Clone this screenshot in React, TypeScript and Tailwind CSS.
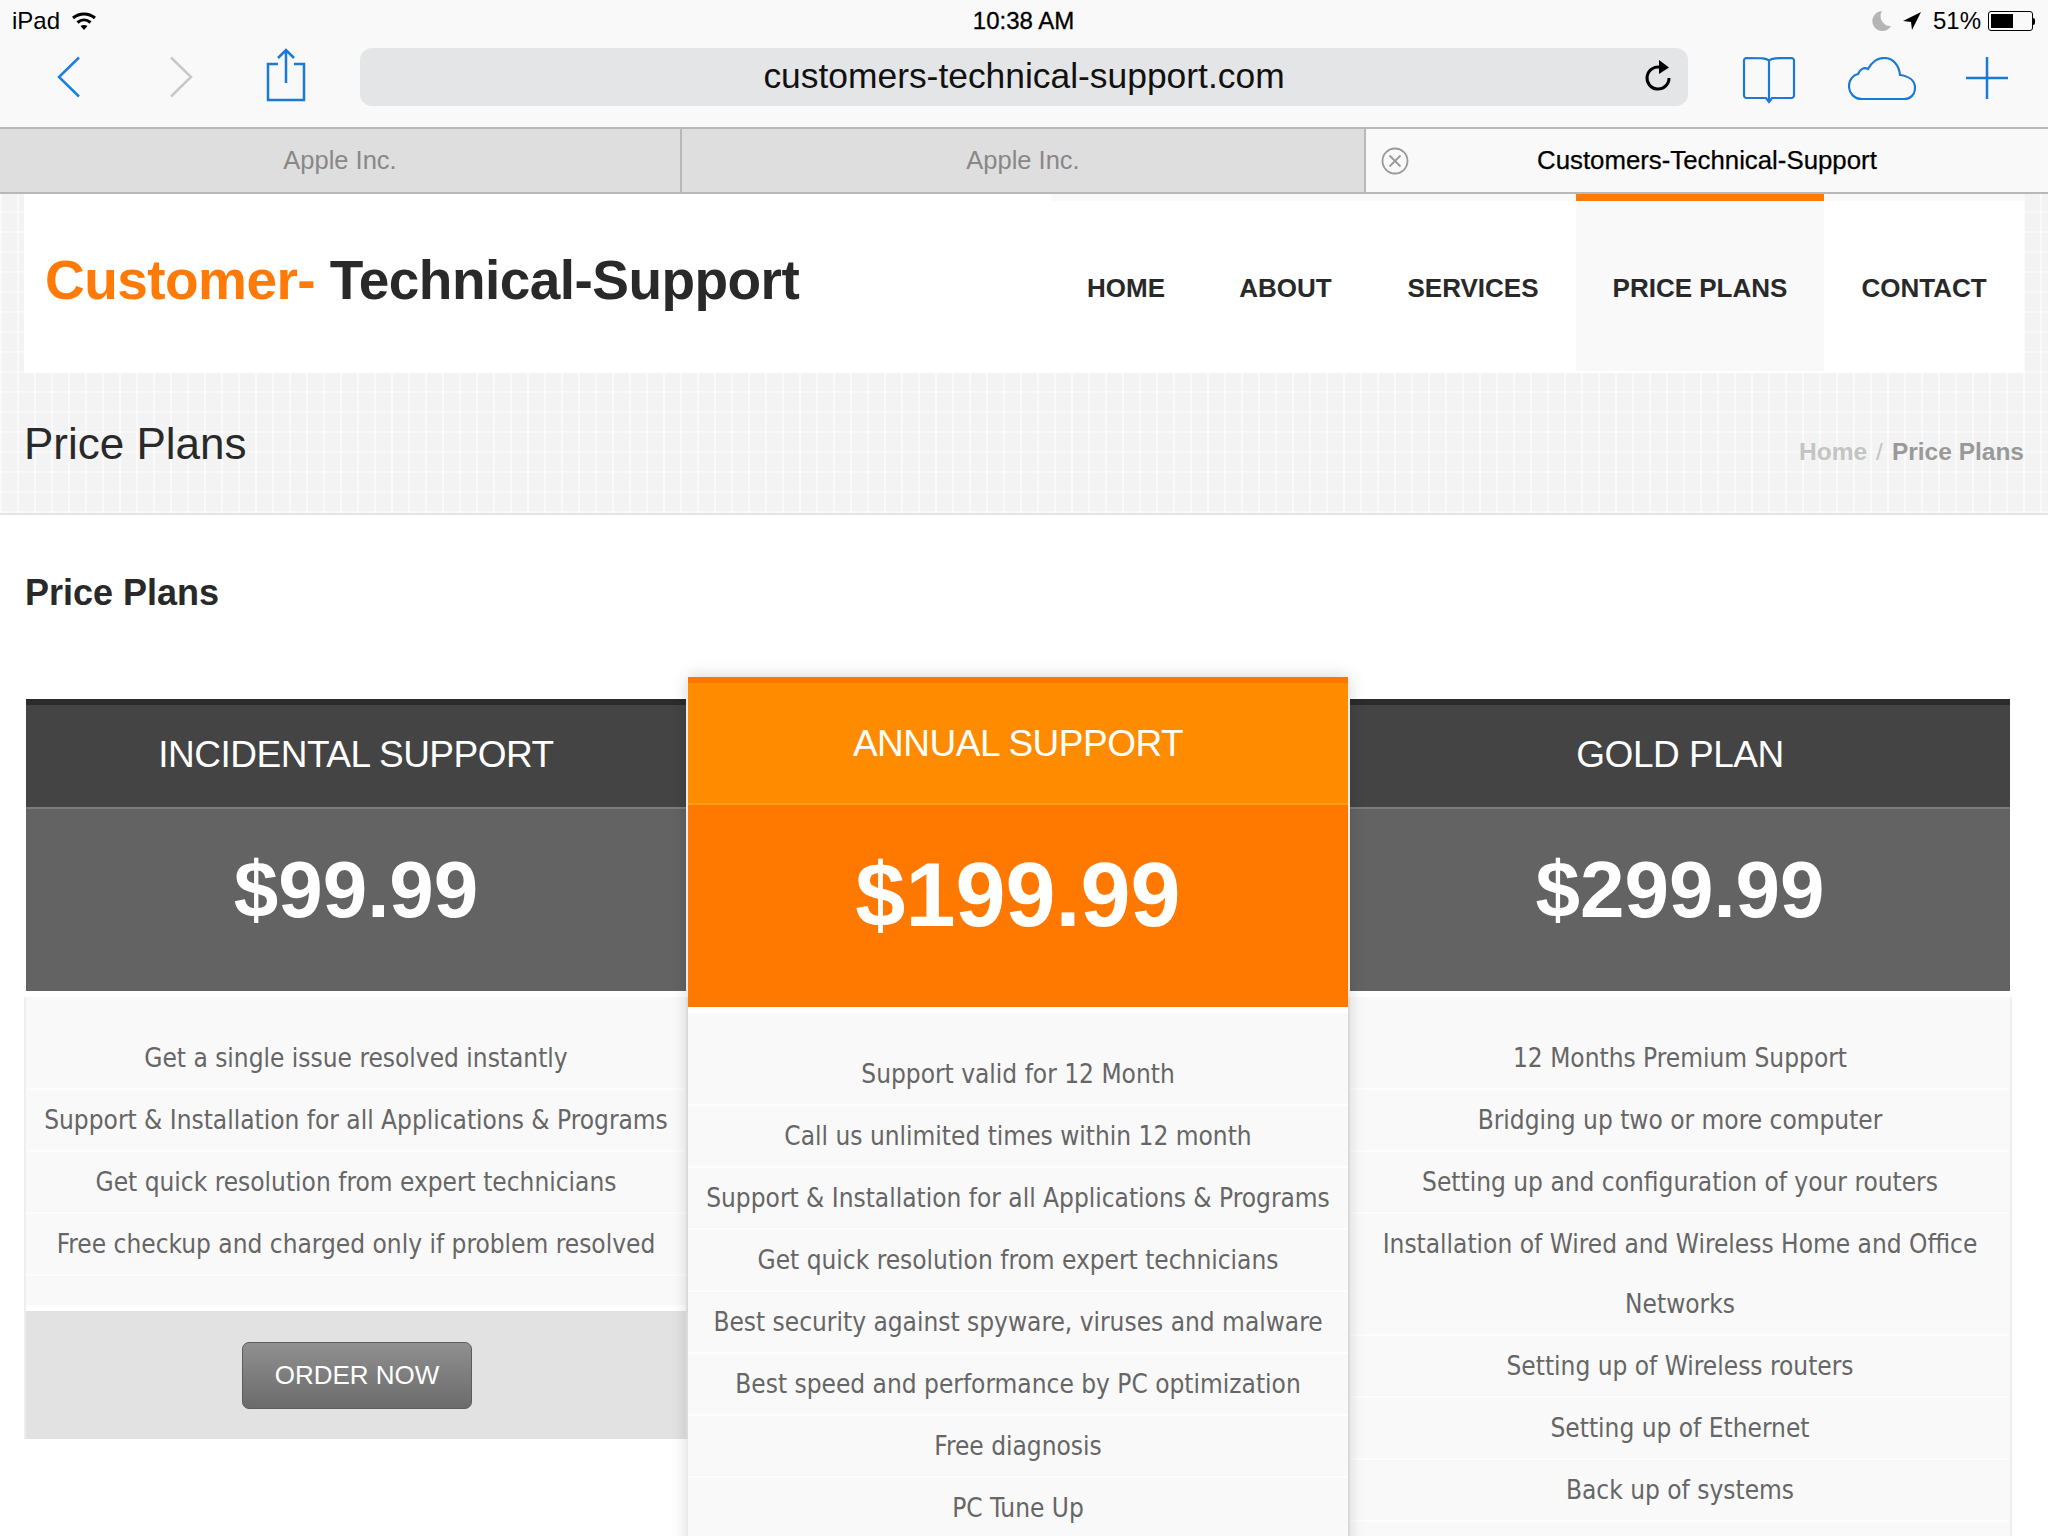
import clsx from 'clsx'

const texture =
  '[background-image:repeating-linear-gradient(0deg,rgba(255,255,255,0.4)_0,rgba(255,255,255,0.4)_2px,transparent_2px,transparent_20px),repeating-linear-gradient(90deg,rgba(255,255,255,0.55)_0,rgba(255,255,255,0.55)_2px,transparent_2px,transparent_17px)]'

const navItems = [
  { label: 'HOME', width: 'w-[150px]' },
  { label: 'ABOUT', width: 'w-[169px]' },
  { label: 'SERVICES', width: 'w-[206px]' },
  { label: 'PRICE PLANS', width: 'w-[248px]', active: true },
  { label: 'CONTACT', width: 'w-[200px]' },
]

const incidental = [
  'Get a single issue resolved instantly',
  'Support & Installation for all Applications & Programs',
  'Get quick resolution from expert technicians',
  'Free checkup and charged only if problem resolved',
]

const annual = [
  'Support valid for 12 Month',
  'Call us unlimited times within 12 month',
  'Support & Installation for all Applications & Programs',
  'Get quick resolution from expert technicians',
  'Best security against spyware, viruses and malware',
  'Best speed and performance by PC optimization',
  'Free diagnosis',
  'PC Tune Up',
]

const gold = [
  '12 Months Premium Support',
  'Bridging up two or more computer',
  'Setting up and configuration of your routers',
  'Installation of Wired and Wireless Home and Office Networks',
  'Setting up of Wireless routers',
  'Setting up of Ethernet',
  'Back up of systems',
]

function Features({ items }: { items: string[] }) {
  return (
    <ul className="font-['DejaVu_Sans_Condensed','DejaVu_Sans',sans-serif] text-[26px] leading-[60px] text-[#666]">
      {items.map((item) => (
        <li key={item} className="border-b-2 border-[#fdfdfd] px-2 text-center">
          {item}
        </li>
      ))}
    </ul>
  )
}

function StatusBar() {
  return (
    <div className="flex h-[40px] items-center justify-between pl-[12px] pr-[13px] pt-[2px] text-[24px] text-black">
      <div className="flex w-[300px] items-center gap-[11px]">
        <span>iPad</span>
        <svg width="26" height="20" viewBox="0 0 26 20" fill="none" stroke="black" strokeWidth="3">
          <path d="M2 7c6.500-5.500 15.500-5.500 22 0" />
          <path d="M6.500 11.500c4-3.500 9-3.500 13 0" />
          <path d="M13 19l-3.500-4c2-1.500 5-1.500 7 0z" fill="black" stroke="none" />
        </svg>
      </div>
      <span className="font-medium [-webkit-text-stroke:0.3px_black]">10:38 AM</span>
      <div className="flex w-[300px] items-center justify-end">
        <svg width="20" height="24" viewBox="0 0 20 24" className="mr-[10px]">
          <path d="M10 2a10 10 0 1 0 9 15A10 10 0 0 1 10 2z" fill="#b5b5b5" />
        </svg>
        <svg width="20" height="24" viewBox="0 0 20 24" className="mr-[11px]">
          <path d="M19 3L1 12l8 1 1 8z" fill="black" />
        </svg>
        <span className="mr-[7px]">51%</span>
        <div className="flex h-[20px] w-[45px] items-center rounded-[3px] border border-black p-[2px]">
          <div className="h-full w-[22px] bg-black" />
        </div>
        <div className="h-[7px] w-[2px] rounded-r-sm bg-black" />
      </div>
    </div>
  )
}

function Toolbar() {
  return (
    <div className="flex h-[89px] items-start border-b-2 border-[#b8b8b8] pt-[8px]">
      <div className="flex h-[58px] w-[360px] items-center">
        <svg width="24" height="42" viewBox="0 0 24 42" fill="none" stroke="#1a7fe0" strokeWidth="2.500" className="ml-[57px]">
          <path d="M22 1.500L2 21l20 19.500" />
        </svg>
        <svg width="24" height="42" viewBox="0 0 24 42" fill="none" stroke="#c8c8c8" strokeWidth="2.500" className="ml-[88px]">
          <path d="M2 1.500L22 21 2 40.500" />
        </svg>
        <svg width="40" height="54" viewBox="0 0 40 54" fill="none" stroke="#1a7ad4" strokeWidth="2.500" className="ml-[73px] mt-[-4px]">
          <path d="M12 16H2v36h36V16H28" />
          <path d="M20 35V2M12 10l8-8 8 8" />
        </svg>
      </div>
      <div className="relative flex h-[58px] w-[1328px] items-center justify-center rounded-[12px] bg-[#e4e5e7]">
        <span className="text-[35.4px] leading-none text-[#111]">customers-technical-support.com</span>
        <svg width="30" height="34" viewBox="0 0 30 34" fill="none" className="absolute right-[15px] top-[11px]">
          <path d="M18 8.500A11 11 0 1 0 26 19" stroke="black" strokeWidth="3" />
          <path d="M16 1l10 7.500L16 15z" fill="black" />
        </svg>
      </div>
      <div className="flex h-[58px] flex-1 items-center">
        <svg width="54" height="48" viewBox="0 0 54 48" fill="none" stroke="#1a7ad4" strokeWidth="2.200" className="ml-[54px] mt-[6px]">
          <path d="M27 4.500C24 2 21 2 4 2a3 3 0 0 0-2 2v36a3 3 0 0 0 2 2h20l3 4 3-4h20a3 3 0 0 0 2-2V4a3 3 0 0 0-2-2C33 2 30 2 27 4.500zV46" />
        </svg>
        <svg width="68" height="44" viewBox="0 0 68 44" fill="none" stroke="#1a7ad4" strokeWidth="2.200" className="ml-[52px] mt-[3px]">
          <path d="M14 42C6 42 1 36 1 29c0-6 4-11 9-12 2-5 6-7 10-5C24 5 30 1 36 1c9 0 15 7 16 17 8 1 15 5 15 13 0 7-5 11-11 11z" />
        </svg>
        <svg width="42" height="42" viewBox="0 0 42 42" stroke="#1a7ad4" strokeWidth="2.500" className="ml-[50px] mt-[1px]">
          <path d="M21 0v42M0 21h42" />
        </svg>
      </div>
    </div>
  )
}

function TabStrip() {
  return (
    <div className="flex h-[65px] border-b-2 border-[#b8b8b8] text-[25.5px]">
      <div className="flex w-[682px] items-center justify-center border-r-2 border-[#b8b8b8] bg-[#dedede] text-[#888]">Apple Inc.</div>
      <div className="flex w-[684px] items-center justify-center border-r-2 border-[#b8b8b8] bg-[#dedede] text-[#888]">Apple Inc.</div>
      <div className="flex flex-1 items-center">
        <svg width="28" height="28" viewBox="0 0 28 28" fill="none" stroke="#999" strokeWidth="1.800" className="ml-[15px]">
          <circle cx="14" cy="14" r="12.500" />
          <path d="M8.500 8.500l11 11M19.500 8.500l-11 11" />
        </svg>
        <span className="ml-[128px] text-[25.8px] font-medium text-black [-webkit-text-stroke:0.25px_black]">Customers-Technical-Support</span>
      </div>
    </div>
  )
}

function SiteHeader() {
  return (
    <div className={clsx('bg-[#f3f3f3] px-[24px]', texture)}>
      <div className="flex h-[179px] items-stretch justify-between bg-white">
        <div className="pl-[21px] pt-[50px] text-[55px] font-bold leading-[72px] tracking-[-0.55px] text-[#292929]">
          <span className="text-[#ff7a06]">Customer-</span> Technical-Support
        </div>
        <nav className="flex h-[177px] text-[26px] font-bold text-[#292929]">
          {navItems.map((item) => (
            <a
              key={item.label}
              className={clsx(
                'flex items-center justify-center border-t-[7px] pt-[4px]',
                item.width,
                item.active ? 'border-[#ff7a06] bg-[#f9f9f9]' : 'border-[#f9f9f9]'
              )}
            >
              {item.label}
            </a>
          ))}
        </nav>
      </div>
    </div>
  )
}

function TitleBand() {
  return (
    <div className={clsx('flex h-[142px] items-center justify-between border-b-2 border-[#e4e4e4] bg-[#f3f3f3] pl-[24px] pr-[24px]', texture)}>
      <h1 className="mt-[2px] text-[44px] leading-none text-[#292929]">Price Plans</h1>
      <div className="mt-[18px] text-[24.5px] font-bold text-[#999]">
        <span className="text-[#c4c4c4]">Home</span>
        <span className="mx-[9px] font-normal text-[#c4c4c4]">/</span>
        Price Plans
      </div>
    </div>
  )
}

function SideCard({ title, price, children }: { title: string; price: string; children: React.ReactNode }) {
  return (
    <div className="mt-[22px] min-w-0 flex-1">
      <div className="flex h-[108px] items-center justify-center border-t-[6px] border-[#2b2b2b] bg-[#444444] pb-[2px] text-[37px] tracking-[-0.5px] text-white">
        {title}
      </div>
      <div className="flex h-[184px] items-center justify-center border-t-2 border-[#7b7b7b] bg-[#636363] pb-[20px] text-[80px] font-bold text-white">
        {price}
      </div>
      <div className="mt-[6px] bg-[#f9f9f9] pt-[31px] shadow-[-2px_0_0_#eeeeee,2px_0_0_#eeeeee]">{children}</div>
    </div>
  )
}

export default function App() {
  return (
    <div className="h-[1536px] overflow-hidden bg-white font-['Liberation_Sans',Arial,sans-serif]">
      <div className="bg-[#f9f9f9]">
        <StatusBar />
        <Toolbar />
        <TabStrip />
      </div>
      <SiteHeader />
      <TitleBand />

      <h2 className="pl-[25px] pt-[57px] text-[36px] font-bold leading-[42px] text-[#292929]">Price Plans</h2>

      <div className="ml-[26px] mt-[63px] flex w-[1984px] items-start gap-[2px]">
        <SideCard title="INCIDENTAL SUPPORT" price="$99.99">
          <Features items={incidental} />
          <div className="h-[29px]" />
          <div className="flex h-[134px] items-center justify-center border-t-[6px] border-t-white bg-[#e2e2e2] pl-[2px]">
            <a className="flex h-[67px] w-[230px] items-center justify-center rounded-[7px] border border-[#5c5c5c] bg-gradient-to-b from-[#909090] to-[#6b6b6b] text-[26px] text-white">
              ORDER NOW
            </a>
          </div>
        </SideCard>

        <div className="relative z-10 w-[660px] shrink-0 shadow-[0_0_16px_rgba(0,0,0,0.18)]">
          <div className="flex h-[126px] items-center justify-center border-t-[6px] border-[#ff7600] bg-[#ff8c00] pt-[2px] text-[37px] tracking-[-0.5px] text-white">
            ANNUAL SUPPORT
          </div>
          <div className="flex h-[204px] items-center justify-center border-t-2 border-[#ff9d12] bg-[#ff7800] pb-[22px] text-[90px] font-bold text-white">
            $199.99
          </div>
          <div className="mt-[6px] bg-[#f9f9f9] pb-[200px] pt-[31px]">
            <Features items={annual} />
          </div>
        </div>

        <SideCard title="GOLD PLAN" price="$299.99">
          <div className="pb-[200px]">
            <Features items={gold} />
          </div>
        </SideCard>
      </div>
    </div>
  )
}
